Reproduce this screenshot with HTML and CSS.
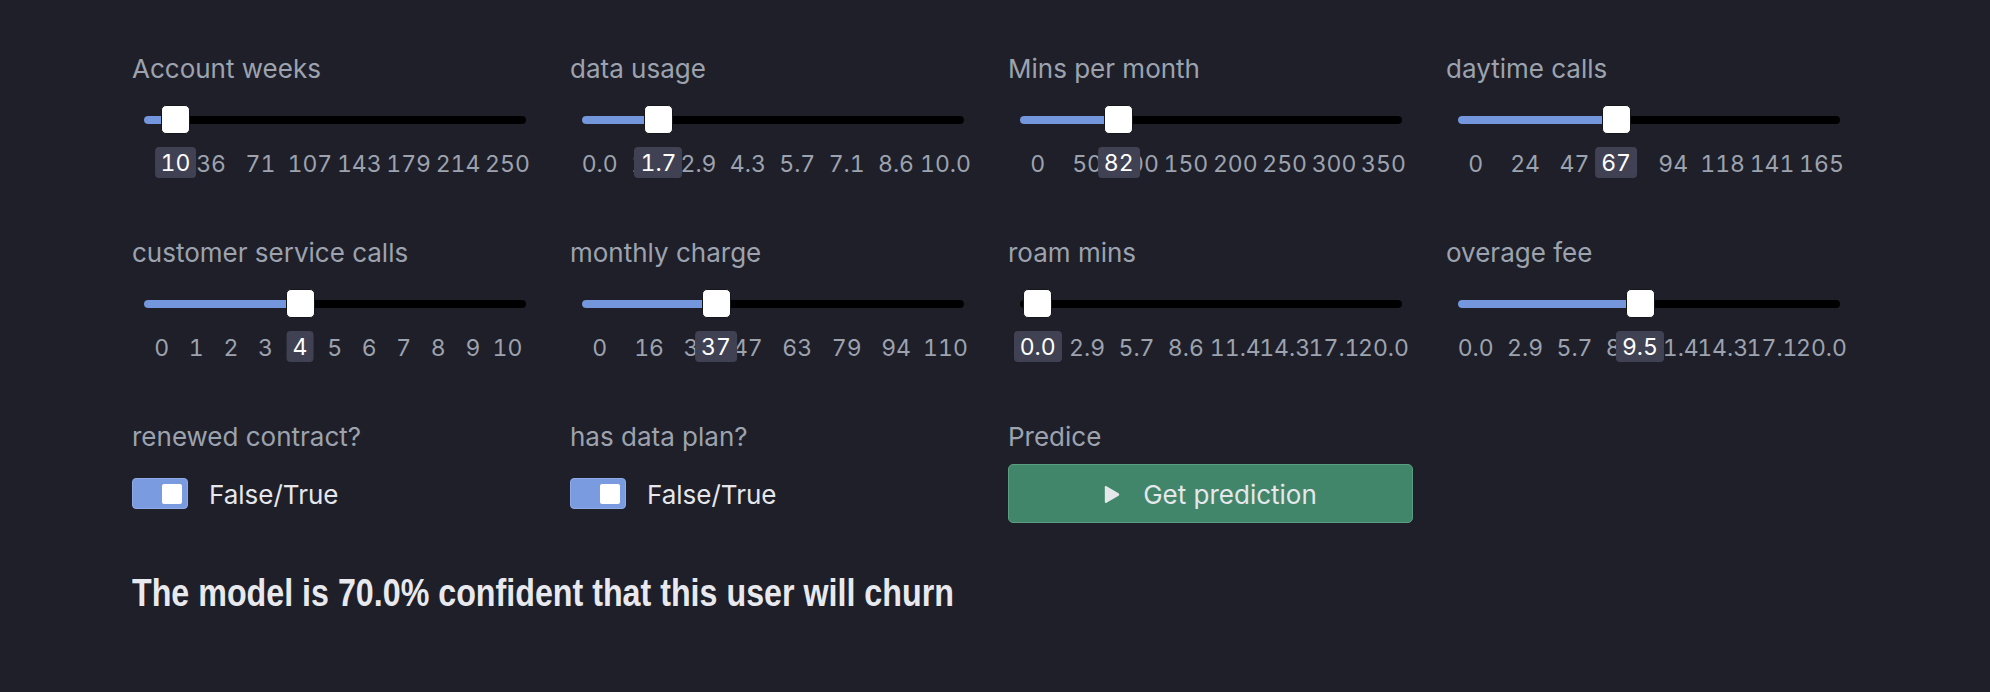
FILE: index.html
```html
<!DOCTYPE html>
<html lang="en">
<head>
<meta charset="utf-8">
<title>Churn prediction</title>
<link rel="stylesheet" href="styles.css">
</head>
<body>
<main class="app">
  <section class="grid">
    <div class="field">
      <div class="label">Account weeks</div>
      <div class="slider">
        <div class="track"><div class="fill" style="width:31.5px"></div><div class="thumb" style="left:17px"></div></div>
        <div class="ticks">
          <span class="tick"><span>0</span></span><span class="tick"><span>36</span></span><span class="tick"><span>71</span></span><span class="tick"><span>107</span></span><span class="tick"><span>143</span></span><span class="tick"><span>179</span></span><span class="tick"><span>214</span></span><span class="tick"><span>250</span></span>
          <span class="value" style="left:4%">10</span>
        </div>
      </div>
    </div>
    <div class="field">
      <div class="label">data usage</div>
      <div class="slider">
        <div class="track"><div class="fill" style="width:76.5px"></div><div class="thumb" style="left:62px"></div></div>
        <div class="ticks">
          <span class="tick"><span>0.0</span></span><span class="tick"><span>1.4</span></span><span class="tick"><span>2.9</span></span><span class="tick"><span>4.3</span></span><span class="tick"><span>5.7</span></span><span class="tick"><span>7.1</span></span><span class="tick"><span>8.6</span></span><span class="tick"><span>10.0</span></span>
          <span class="value" style="left:17%">1.7</span>
        </div>
      </div>
    </div>
    <div class="field">
      <div class="label">Mins per month</div>
      <div class="slider">
        <div class="track"><div class="fill" style="width:98.7px"></div><div class="thumb" style="left:84.2px"></div></div>
        <div class="ticks">
          <span class="tick"><span>0</span></span><span class="tick"><span>50</span></span><span class="tick"><span>100</span></span><span class="tick"><span>150</span></span><span class="tick"><span>200</span></span><span class="tick"><span>250</span></span><span class="tick"><span>300</span></span><span class="tick"><span>350</span></span>
          <span class="value" style="left:23.43%">82</span>
        </div>
      </div>
    </div>
    <div class="field">
      <div class="label">daytime calls</div>
      <div class="slider">
        <div class="track"><div class="fill" style="width:158.1px"></div><div class="thumb" style="left:143.6px"></div></div>
        <div class="ticks">
          <span class="tick"><span>0</span></span><span class="tick"><span>24</span></span><span class="tick"><span>47</span></span><span class="tick"><span>71</span></span><span class="tick"><span>94</span></span><span class="tick"><span>118</span></span><span class="tick"><span>141</span></span><span class="tick"><span>165</span></span>
          <span class="value" style="left:40.61%">67</span>
        </div>
      </div>
    </div>

    <div class="field">
      <div class="label">customer service calls</div>
      <div class="slider">
        <div class="track"><div class="fill" style="width:156px"></div><div class="thumb" style="left:141.5px"></div></div>
        <div class="ticks">
          <span class="tick"><span>0</span></span><span class="tick"><span>1</span></span><span class="tick"><span>2</span></span><span class="tick"><span>3</span></span><span class="tick"><span>4</span></span><span class="tick"><span>5</span></span><span class="tick"><span>6</span></span><span class="tick"><span>7</span></span><span class="tick"><span>8</span></span><span class="tick"><span>9</span></span><span class="tick"><span>10</span></span>
          <span class="value" style="left:40%">4</span>
        </div>
      </div>
    </div>
    <div class="field">
      <div class="label">monthly charge</div>
      <div class="slider">
        <div class="track"><div class="fill" style="width:134px"></div><div class="thumb" style="left:119.5px"></div></div>
        <div class="ticks">
          <span class="tick"><span>0</span></span><span class="tick"><span>16</span></span><span class="tick"><span>31</span></span><span class="tick"><span>47</span></span><span class="tick"><span>63</span></span><span class="tick"><span>79</span></span><span class="tick"><span>94</span></span><span class="tick"><span>110</span></span>
          <span class="value" style="left:33.64%">37</span>
        </div>
      </div>
    </div>
    <div class="field">
      <div class="label">roam mins</div>
      <div class="slider">
        <div class="track"><div class="fill" style="width:0px"></div><div class="thumb" style="left:3.2px"></div></div>
        <div class="ticks">
          <span class="tick"><span>0.0</span></span><span class="tick"><span>2.9</span></span><span class="tick"><span>5.7</span></span><span class="tick"><span>8.6</span></span><span class="tick"><span>11.4</span></span><span class="tick"><span>14.3</span></span><span class="tick"><span>17.1</span></span><span class="tick"><span>20.0</span></span>
          <span class="value" style="left:0%">0.0</span>
        </div>
      </div>
    </div>
    <div class="field">
      <div class="label">overage fee</div>
      <div class="slider">
        <div class="track"><div class="fill" style="width:182px"></div><div class="thumb" style="left:167.5px"></div></div>
        <div class="ticks">
          <span class="tick"><span>0.0</span></span><span class="tick"><span>2.9</span></span><span class="tick"><span>5.7</span></span><span class="tick"><span>8.6</span></span><span class="tick"><span>11.4</span></span><span class="tick"><span>14.3</span></span><span class="tick"><span>17.1</span></span><span class="tick"><span>20.0</span></span>
          <span class="value" style="left:47.5%">9.5</span>
        </div>
      </div>
    </div>

    <div class="field">
      <div class="label">renewed contract?</div>
      <div class="control">
        <div class="toggle"><span class="knob"></span></div>
        <span class="toggle-text">False/True</span>
      </div>
    </div>
    <div class="field">
      <div class="label">has data plan?</div>
      <div class="control">
        <div class="toggle"><span class="knob"></span></div>
        <span class="toggle-text">False/True</span>
      </div>
    </div>
    <div class="field">
      <div class="label">Predice</div>
      <div class="control">
        <button class="predict" type="button">
          <svg class="play" width="16" height="19" viewBox="0 0 16 19" aria-hidden="true"><path d="M2.5 1.2 L14.6 8.3 Q16 9.5 14.6 10.7 L2.5 17.8 Q0.8 18.7 0.8 16.8 V2.2 Q0.8 0.3 2.5 1.2 Z" fill="#e5e7eb"/></svg>
          <span>Get prediction</span>
        </button>
      </div>
    </div>
  </section>
  <h2 class="result">The model is 70.0% confident that this user will churn</h2>
</main>
</body>
</html>
```

FILE: styles.css
```css
html, body {
  margin: 0;
  padding: 0;
  background: #1f1f29;
}
body {
  width: 1990px;
  height: 692px;
  overflow: hidden;
  font-family: Inter, "Noto Sans", "Liberation Sans", sans-serif;
  color: #9ca3af;
}
.app {
  padding: 53px 0 0 132px;
}
.grid {
  display: grid;
  grid-template-columns: repeat(4, 405px);
  column-gap: 33px;
  row-gap: 59px;
}
.label {
  font-size: 26px;
  line-height: 32px;
  height: 32px;
  color: #9ca3af;
  white-space: nowrap;
}
.slider {
  padding-top: 31px;
}
.track {
  position: relative;
  margin: 0 11px 0 12px;
  height: 8px;
  border-radius: 4px;
  background: #000;
}
.fill {
  height: 8px;
  border-radius: 4px;
  background: #7496dc;
}
.thumb {
  position: absolute;
  top: -11px;
  width: 27px;
  height: 27px;
  background: #fff;
  border: 1px solid #15151c;
  border-radius: 5px;
}
.ticks {
  position: relative;
  margin: 26px 0 0 29.7px;
  width: 345.8px;
  height: 28px;
  display: flex;
  justify-content: space-between;
  font-size: 23px;
  line-height: 28px;
  font-variant-numeric: tabular-nums;
  color: #9ca3af;
}
.tick {
  width: 0;
  display: flex;
  justify-content: center;
  white-space: nowrap;
}
.value {
  position: absolute;
  top: -3.5px;
  height: 31px;
  line-height: 33px;
  padding: 0 6px;
  transform: translateX(-50%);
  background: #404253;
  color: #fff;
  border-radius: 4px;
  white-space: nowrap;
}
.control {
  margin-top: 11px;
  height: 59px;
  display: flex;
  align-items: center;
}
.toggle {
  box-sizing: border-box;
  width: 56px;
  height: 31px;
  padding: 0 5px;
  display: flex;
  align-items: center;
  justify-content: flex-end;
  background: #7b9be0;
  border: 1px solid #8eabe8;
  border-radius: 4px;
}
.knob {
  width: 20px;
  height: 20px;
  background: #fff;
  border-radius: 2px;
}
.toggle-text {
  margin-left: 21px;
  font-size: 26px;
  line-height: 32px;
  color: #e5e7eb;
  padding-top: 2px;
}
.predict {
  box-sizing: border-box;
  width: 405px;
  height: 59px;
  display: flex;
  align-items: center;
  justify-content: center;
  gap: 23px;
  padding: 2px 0 0 0;
  background: #41866a;
  border: 1px solid #5a9d7f;
  border-radius: 5px;
  font-family: Inter, "Noto Sans", "Liberation Sans", sans-serif;
  font-size: 26px;
  color: #e5e7eb;
}
.play {
  display: block;
}
.result {
  margin: 47px 0 0 0;
  font-family: "Liberation Sans", Arial, sans-serif;
  font-weight: 700;
  font-size: 38px;
  line-height: 47px;
  color: #e8e9ee;
  white-space: nowrap;
  transform: scaleX(0.848);
  transform-origin: left center;
}
```
